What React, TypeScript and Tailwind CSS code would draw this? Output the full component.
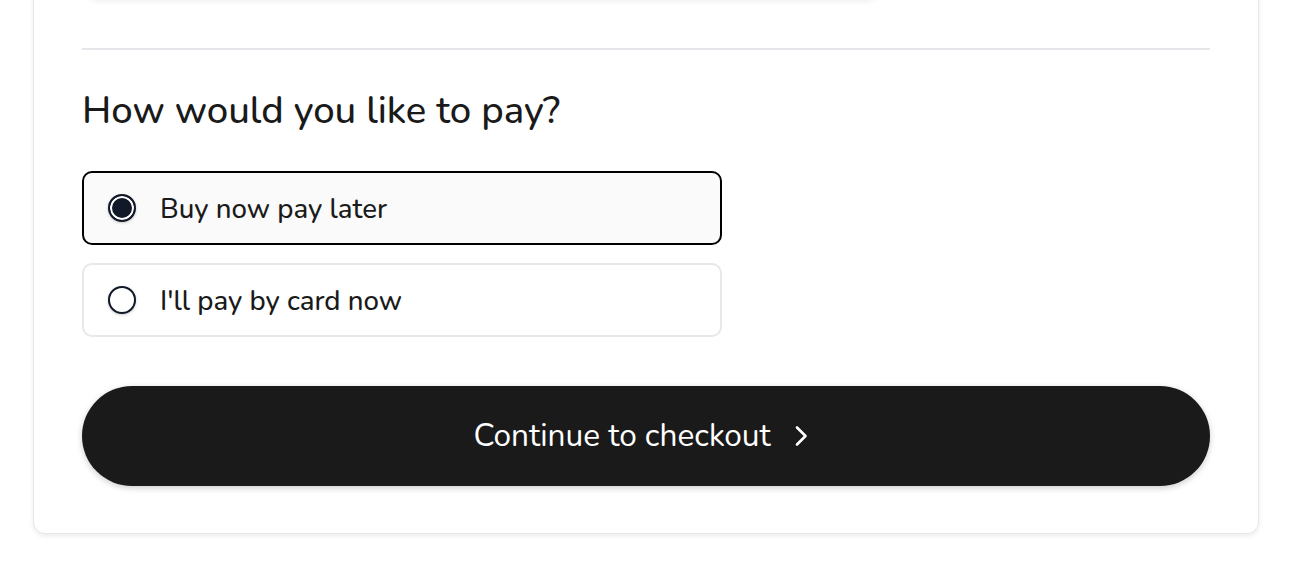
import React from "react";

export default function App() {
  const font = { fontFamily: '"Nunito", Lato, "Noto Sans", sans-serif' };
  return (
    <div className="w-[1302px] h-[584px] overflow-hidden bg-white" style={font}>
      <div className="ml-[33px] w-[1226px] -mt-[62px] rounded-[12px] bg-white border border-[#e6e6ec] shadow-[0_2px_5px_rgba(0,0,0,0.08)] px-[48px] pb-[47px]">
        <div className="ml-[6px] w-[790px] h-[60px] rounded-[10px] bg-white shadow-[0_2px_6px_rgba(0,0,0,0.08)]" />
        <div className="mt-[49px] h-[2px] bg-[#e5e5ea]" />
        <h2 className="mt-[36px] text-[38.3px] leading-[50px] text-[#1a1a1a] font-medium">
          How would you like to pay?
        </h2>
        <div className="mt-[35px] flex flex-col gap-[18px] w-[640px]">
          <label className="flex items-center h-[74px] rounded-[10px] border-2 border-black bg-[#fafafa] pl-[24px]">
            <span className="w-[28px] h-[28px] rounded-full bg-[#111827] border-2 border-[#111827] shadow-[inset_0_0_0_2px_white,0_1px_3px_rgba(0,0,0,0.2)]" />
            <span className="ml-[24px] mt-[3px] text-[27.6px] font-medium text-[#1a1a1a]">Buy now pay later</span>
          </label>
          <label className="flex items-center h-[74px] rounded-[10px] border-2 border-[#e8e8ec] bg-white pl-[24px]">
            <span className="w-[28px] h-[28px] rounded-full bg-white border-2 border-[#111827] shadow-[0_1px_3px_rgba(0,0,0,0.2)]" />
            <span className="ml-[24px] mt-[3px] text-[27.6px] font-medium text-[#1a1a1a]">I'll pay by card now</span>
          </label>
        </div>
        <button className="mt-[49px] w-full h-[100px] rounded-full bg-[#1a1a1a] shadow-[0_2px_6px_rgba(0,0,0,0.2)] flex items-center justify-center gap-[22px] pr-[10px] text-white text-[31.6px]">
          <span>Continue to checkout</span>
          <svg width="16" height="22" viewBox="0 0 16 22" fill="none">
            <path d="M4 2.5 L12.5 11 L4 19.5" stroke="white" strokeWidth="2.6" strokeLinecap="round" strokeLinejoin="round" />
          </svg>
        </button>
      </div>
    </div>
  );
}
